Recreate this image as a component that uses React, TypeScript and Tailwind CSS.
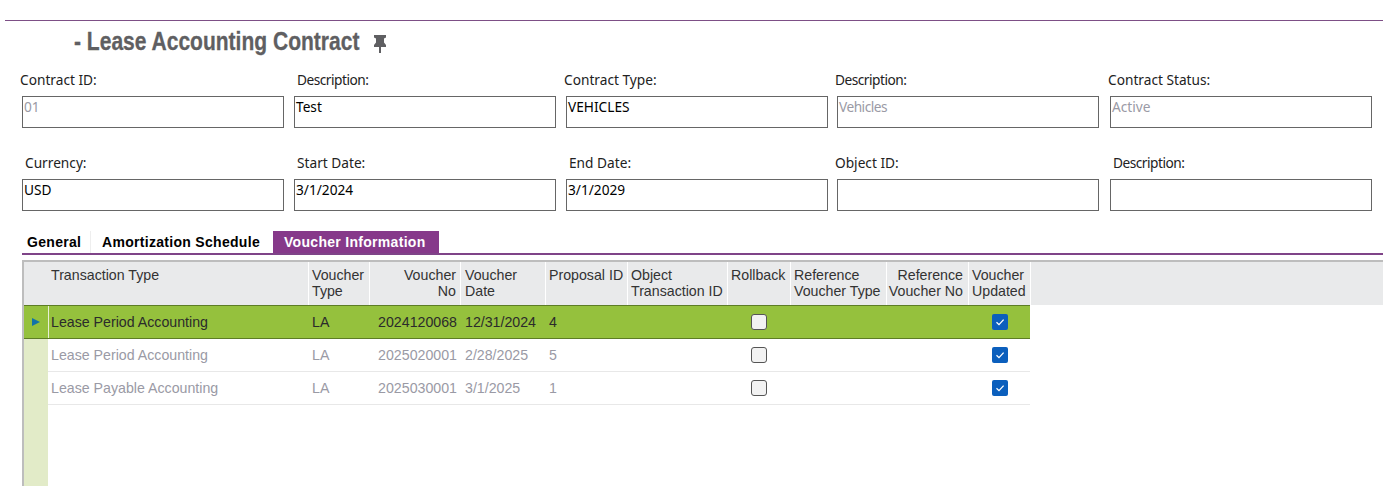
const topFields = [
  { label: "Contract ID:", value: "01", muted: true, shift: "-ml-0.5", gap: "" },
  { label: "Description:", value: "Test", muted: false, shift: "ml-[3px] tracking-[-0.5px]", gap: "" },
  { label: "Contract Type:", value: "VEHICLES", muted: false, shift: "-ml-0.5", gap: "" },
  { label: "Description:", value: "Vehicles", muted: true, shift: "-ml-0.5 tracking-[-0.5px]", gap: "-ml-px", tight: true },
  { label: "Contract Status:", value: "Active", muted: true, shift: "-ml-0.5", gap: "ml-px" },
];

const bottomFields = [
  { label: "Currency:", value: "USD", muted: false, shift: "ml-[3px]", gap: "" },
  { label: "Start Date:", value: "3/1/2024", muted: false, shift: "ml-[3px]", gap: "" },
  { label: "End Date:", value: "3/1/2029", muted: false, shift: "ml-[3px]", gap: "" },
  { label: "Object ID:", value: "", muted: false, shift: "-ml-0.5", gap: "-ml-px" },
  { label: "Description:", value: "", muted: false, shift: "ml-[3px] tracking-[-0.5px]", gap: "ml-px" },
];

const columns = [
  { lines: ["Transaction Type"], width: "w-[261px]", pad: "pl-[3px]" },
  { lines: ["Voucher", "Type"], width: "w-[61px]", pad: "pl-[3px]" },
  { lines: ["Voucher", "No"], width: "w-[91px]", pad: "pr-1 text-right" },
  { lines: ["Voucher", "Date"], width: "w-[85px]", pad: "pl-1" },
  { lines: ["Proposal ID"], width: "w-[82px]", pad: "pl-[3px]" },
  { lines: ["Object", "Transaction ID"], width: "w-[100px]", pad: "pl-[3px]" },
  { lines: ["Rollback"], width: "w-[63px]", pad: "pl-[3px]" },
  { lines: ["Reference", "Voucher Type"], width: "w-[96px]", pad: "pl-[3px]" },
  { lines: ["Reference", "Voucher No"], width: "w-[82px]", pad: "pr-[5px] text-right" },
  { lines: ["Voucher", "Updated"], width: "w-[62px]", pad: "pl-[3px]" },
];

const rows = [
  { type: "Lease Period Accounting", no: "2024120068", date: "12/31/2024", proposal: "4", active: true },
  { type: "Lease Period Accounting", no: "2025020001", date: "2/28/2025", proposal: "5", active: false },
  { type: "Lease Payable Accounting", no: "2025030001", date: "3/1/2025", proposal: "1", active: false },
];

function Field({
  label,
  value,
  muted,
  shift,
  gap,
  tight,
}: {
  label: string;
  value: string;
  muted: boolean;
  shift: string;
  gap: string;
  tight?: boolean;
}) {
  return (
    <div className={`w-[262px] ${gap}`}>
      <div className={`h-[25px] text-[13.7px] leading-[18px] text-[#222] ${shift}`}>{label}</div>
      <div
        className={`h-8 border border-[#666] px-px pt-[1px] text-[13.7px] leading-[18px] ${muted ? "text-[#9a9aa5]" : "text-black"} ${tight ? "tracking-[-0.5px]" : ""}`}
      >
        {value}
      </div>
    </div>
  );
}

function Checkbox({ checked }: { checked: boolean }) {
  if (checked) {
    return (
      <span className="flex size-4 items-center justify-center rounded-[2px] bg-[#0b5fbd]">
        <svg viewBox="0 0 16 16" className="size-4" fill="none" stroke="white" strokeWidth="1.3">
          <path d="M4.5 8.2 7 10.6 11.6 5.6" />
        </svg>
      </span>
    );
  }
  return <span className="block size-4 rounded-[3px] border border-[#555] bg-[#f2f2f2]" />;
}

export default function App() {
  return (
    <div className="h-[486px] w-[1386px] overflow-hidden bg-white font-['Noto_Sans',sans-serif]">
      <div className="pl-[5px] pr-[3px] pt-5">
        <div className="h-px bg-[#7d4f86]" />
      </div>

      <div className="flex h-[42px] items-center pl-[74px]">
        <h1 className="origin-left scale-x-[0.841] whitespace-nowrap font-['Liberation_Sans',sans-serif] text-[25px] font-bold text-[#5f5f62] [-webkit-text-stroke:0.3px_#5f5f62]">
          - Lease Accounting Contract
        </h1>
        <svg viewBox="0 0 12 18" className="-ml-[39px] mt-1 h-[18px] w-3" fill="#5f5f62">
          <path d="M0 0h12v2.5L10 3.5v4L12 10v2H7v6H5v-6H0v-2l2-2.5v-4L0 2.5z" />
        </svg>
      </div>

      <div className="flex gap-[10px] pl-[22px] pt-2">
        {topFields.map((field, i) => (
          <Field key={i} {...field} />
        ))}
      </div>
      <div className="flex gap-[10px] pl-[22px] pt-[26px]">
        {bottomFields.map((field, i) => (
          <Field key={i} {...field} />
        ))}
      </div>

      <div className="ml-[22px] mr-[3px] mt-5 flex h-6 border-b-2 border-[#7f4488] font-['Liberation_Sans',sans-serif] text-[14px] font-bold tracking-[0.3px] text-black">
        <div className="flex w-[69px] items-center border-r border-[#eee] pl-[5px]">General</div>
        <div className="flex w-[182px] items-center pl-[11px]">Amortization Schedule</div>
        <div className="flex w-[166px] items-center bg-[#86398a] pl-[11px] text-white">Voucher Information</div>
      </div>

      <div className="ml-[22px] mr-[3px] mt-[5px] flex h-[226px] flex-col border-l-2 border-t-2 border-[#bdbdbd] font-['Liberation_Sans',sans-serif] text-[14.2px] leading-4">
        <div className="flex h-[43px] shrink-0 bg-[#e9eaeb]">
          <div className="w-6" />
          {columns.map((col, i) => (
            <div key={i} className={`border-r border-white pt-[5px] text-[#333] ${col.width} ${col.pad}`}>
              {col.lines.map((line) => (
                <div key={line}>{line}</div>
              ))}
            </div>
          ))}
        </div>

        <div className="flex flex-1">
          <div className="w-6 bg-[#e2ebc8]">
            <div className="flex h-[34px] items-center justify-center border-y border-[#5d7d25] bg-[#95c13d] pr-px">
              <svg viewBox="0 0 8 8" className="size-2" fill="#1273a8">
                <path d="M0 0 8 4 0 8z" />
              </svg>
            </div>
          </div>
          <div className="w-[982px]">
            {rows.map((row) => (
              <div
                key={row.no}
                className={`flex items-center ${
                  row.active
                    ? "h-[34px] border-y border-[#5d7d25] bg-[#95c13d] text-[#2b2b2b]"
                    : "h-[33px] border-b border-[#e8e8e8] text-[#9a9aa5]"
                }`}
              >
                <div
                  className={`flex h-full w-[261px] items-center ${row.active ? "border-l border-[#e8efd5] pl-[2px]" : "pl-[3px]"}`}
                >
                  {row.type}
                </div>
                <div className="w-[60px] pl-[3px]">LA</div>
                <div className="w-[92px] pr-1 text-right">{row.no}</div>
                <div className="w-[84px] pl-1">{row.date}</div>
                <div className="w-[82px] pl-1">{row.proposal}</div>
                <div className="w-[100px]" />
                <div className="flex w-[63px] justify-center">
                  <Checkbox checked={false} />
                </div>
                <div className="w-[178px]" />
                <div className="flex w-[62px] justify-center pl-0.5">
                  <Checkbox checked />
                </div>
              </div>
            ))}
          </div>
        </div>
      </div>
    </div>
  );
}
